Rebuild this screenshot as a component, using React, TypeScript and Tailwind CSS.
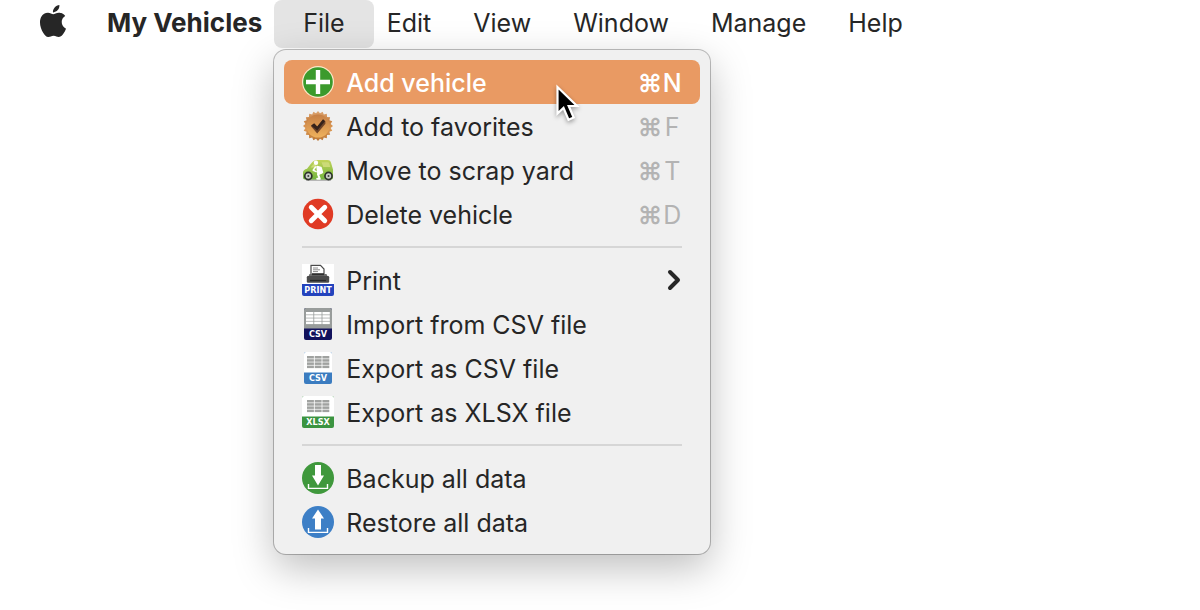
import type { ReactNode } from "react";
import { ChevronRight } from "lucide-react";
import { SiApple } from "react-icons/si";
import clsx from "clsx";

const AddIcon = () => (
  <svg viewBox="0 0 32 32" className="size-8">
    <circle cx="16" cy="16" r="16" fill="#fbe9c9" />
    <circle cx="16" cy="16" r="14.8" fill="#3b9a2c" />
    <path d="M16 4v24M4 16h24" stroke="#fff" strokeWidth="4.4" />
  </svg>
);

const sealPoints = Array.from({ length: 40 }, (_, i) => {
  const r = i % 2 === 0 ? 15 : 12.8;
  const a = (i * Math.PI) / 20;
  return `${(16 + r * Math.sin(a)).toFixed(2)},${(16 - r * Math.cos(a)).toFixed(2)}`;
}).join(" ");

const FavoriteIcon = () => (
  <svg viewBox="0 0 32 32" className="size-8">
    <defs>
      <linearGradient id="seal" x1="0" y1="0" x2="0" y2="1">
        <stop offset="0" stopColor="#dda674" />
        <stop offset="0.3" stopColor="#c98345" />
        <stop offset="0.6" stopColor="#dd9a55" />
        <stop offset="1" stopColor="#b87434" />
      </linearGradient>
      <linearGradient id="sealFace" x1="0" y1="0" x2="0" y2="1">
        <stop offset="0" stopColor="#c67f45" />
        <stop offset="1" stopColor="#efb15c" />
      </linearGradient>
    </defs>
    <polygon points={sealPoints} fill="url(#seal)" />
    <circle cx="16" cy="16" r="11.5" fill="url(#sealFace)" />
    <path d="M9 16.2l3.4-2.2 2.8 2.8 6-7.4 2.2 1.8v2.6l-8.2 9.6z" fill="#6f4428" />
    <path d="M9 15.6l3.2-2.4 3 3.2 5.8-7.2 2 2-7.8 9.4z" fill="#35221b" />
  </svg>
);

const ScrapIcon = () => (
  <svg viewBox="0 0 32 32" className="size-8">
    <defs>
      <linearGradient id="car" x1="0" y1="0" x2="0" y2="1">
        <stop offset="0" stopColor="#c3d45a" />
        <stop offset="1" stopColor="#72b53e" />
      </linearGradient>
    </defs>
    <path d="M4 26h25" stroke="#7d7d7d" strokeWidth="1" />
    <path d="M1 23.500v-5c0-2 1.500-3.100 4-3.800l4.500-5.600C11 6.800 13 6 16 6h9.500c2.400 0 3 1 3.700 3.200l1.800 6.400v7.900c0 1.400-.8 2-2 2H3c-1.200 0-2-.8-2-2z" fill="url(#car)" />
    <path d="M8.600 13.400l3-3.600c.7-.9 1.400-1.200 2.400-1.200v4.800zM19.500 8.200h6c1 0 1.500.5 1.800 1.400l1 3.400h-7z" fill="#ccdb78" />
    <path d="M13.500 13l-2.300 3.200 3 1.400" fill="none" stroke="#fff" strokeWidth="1.500" strokeLinecap="round" strokeLinejoin="round" />
    <path d="M15 12.500l4 1 1.500 5-4.500 1.500z" fill="#fff" stroke="#fff" strokeWidth="1.500" strokeLinejoin="round" />
    <path d="M19.500 18.500L16 20.300l1.800 4.500h-2.600" fill="none" stroke="#fff" strokeWidth="2" strokeLinecap="round" strokeLinejoin="round" />
    <circle cx="14" cy="8.800" r="2.200" fill="#fff" />
    <circle cx="6.300" cy="22" r="4.400" fill="#2e332c" />
    <circle cx="6.300" cy="22" r="2.700" fill="#c8cec5" />
    <circle cx="6.300" cy="22" r="1" fill="#3c413a" />
    <circle cx="26.500" cy="22" r="4.400" fill="#2e332c" />
    <circle cx="26.500" cy="22" r="2.700" fill="#c8cec5" />
    <circle cx="26.500" cy="22" r="1" fill="#3c413a" />
  </svg>
);

const DeleteIcon = () => (
  <svg viewBox="0 0 32 32" className="size-8">
    <circle cx="16" cy="16" r="15.2" fill="#e03a24" />
    <path d="M9.200 9.200l13.600 13.600M22.800 9.200L9.200 22.800" stroke="#fff" strokeWidth="4.800" strokeLinecap="round" />
  </svg>
);

const iconText = "fill-white font-['DejaVu_Sans_Condensed','Open_Sans',sans-serif] text-[9px] font-bold";

const PrintIcon = () => (
  <svg viewBox="0 0 32 32" className="size-8">
    <path d="M0 0h32v20H0z" fill="#fff" />
    <path d="M0 20h32v10a2 2 0 0 1-2 2H2a2 2 0 0 1-2-2z" fill="#2343bd" />
    <path d="M9 10.500V1.400h9.500l3.500 3.600v5.500z" fill="#fff" stroke="#4a4a4a" strokeWidth="1.200" />
    <path d="M11 4h5M11 5.800h7M11 7.600h5" stroke="#8c8c8c" strokeWidth="1" />
    <path d="M5.500 14.500l2-4.500h17l2 4.500z" fill="#6b6b6b" />
    <path d="M10 9.200h12v2H10z" fill="#2f2f2f" />
    <rect x="4.800" y="12" width="22.400" height="6.800" rx="1.200" fill="#4b4b4b" />
    <path d="M8 16.500h16" stroke="#262626" strokeWidth="1.200" />
    <text x="16" y="29" textAnchor="middle" className={iconText}>
      PRINT
    </text>
  </svg>
);

type SheetIconProps = {
  label: string;
  band: string;
  page?: string;
  cell?: string;
  wide?: boolean;
};

const SheetIcon = ({ label, band, page = "#fff", cell = "#a0a2a0", wide }: SheetIconProps) => {
  const x = wide ? 0 : 2;
  const w = 32 - x * 2;
  const dark = page !== "#fff";
  const left = dark ? 4 : 5;
  const cellW = dark ? 7.4 : 6.9;
  return (
    <svg viewBox="0 0 32 32" className="size-8">
      <rect x={x} y="0" width={w} height="32" rx="2" fill={band} />
      <path d={`M${x} 20.400V2a2 2 0 0 1 2-2h${w - 4}a2 2 0 0 1 2 2v18.400z`} fill={page} />
      {[0, 1, 2, 3].map((row) =>
        [0, 1, 2].map((col) => (
          <rect
            key={`${row}-${col}`}
            x={left + col * (cellW + 0.8)}
            y={4 + row * 3.2}
            width={cellW}
            height="2.500"
            fill={cell}
          />
        ))
      )}
      <text x="16" y="29" textAnchor="middle" className={iconText}>
        {label}
      </text>
    </svg>
  );
};

const BackupIcon = () => (
  <svg viewBox="0 0 32 32" className="size-8">
    <circle cx="16" cy="16" r="16" fill="#3f983c" />
    <path d="M13 3h6v10.500h3L16 23.500 10 13.500h3z" fill="#fff" />
    <path d="M6.500 22v4.400h19V22" fill="none" stroke="#fff" strokeWidth="1.400" />
  </svg>
);

const RestoreIcon = () => (
  <svg viewBox="0 0 32 32" className="size-8">
    <circle cx="16" cy="16" r="16" fill="#3d7fc6" />
    <path d="M13 23.500h6V12.500h3L16 3.500l-6 9h3z" fill="#fff" />
    <path d="M6.500 22v4.400h19V22" fill="none" stroke="#fff" strokeWidth="1.400" />
  </svg>
);

type Item = {
  label: string;
  icon: ReactNode;
  shortcut?: string;
  submenu?: boolean;
  active?: boolean;
};

const groups: Item[][] = [
  [
    { label: "Add vehicle", icon: <AddIcon />, shortcut: "N", active: true },
    { label: "Add to favorites", icon: <FavoriteIcon />, shortcut: "F" },
    { label: "Move to scrap yard", icon: <ScrapIcon />, shortcut: "T" },
    { label: "Delete vehicle", icon: <DeleteIcon />, shortcut: "D" },
  ],
  [
    { label: "Print", icon: <PrintIcon />, submenu: true },
    { label: "Import from CSV file", icon: <SheetIcon label="CSV" band="#12125c" page="#989c9b" cell="#fff" /> },
    { label: "Export as CSV file", icon: <SheetIcon label="CSV" band="#3b7cc0" /> },
    { label: "Export as XLSX file", icon: <SheetIcon label="XLSX" band="#3b9440" wide /> },
  ],
  [
    { label: "Backup all data", icon: <BackupIcon /> },
    { label: "Restore all data", icon: <RestoreIcon /> },
  ],
];

const Pointer = () => (
  <svg viewBox="0 0 28 42" className="absolute top-6 left-[270px] h-[42px] w-7 drop-shadow-[0_2px_2px_rgba(0,0,0,0.35)]">
    <path
      d="M3.500 3v26.500l6-5.600 5 11.800 5.200-2.200-5-11.500h8.300z"
      fill="#000"
      stroke="#fff"
      strokeWidth="2.200"
    />
  </svg>
);

const MenuItem = ({ label, icon, shortcut, submenu, active }: Item) => (
  <button
    type="button"
    role="menuitem"
    className={clsx(
      "relative flex h-11 w-full items-center gap-3 rounded-lg px-[18px] text-left whitespace-nowrap",
      active && "bg-[#e99a63] font-medium text-white"
    )}
  >
    {icon}
    <span className="flex-1 pt-0.5">{label}</span>
    {shortcut && (
      <span className={clsx("flex pt-0.5", !active && "text-[#b3b3b3]")}>
        <span className="font-semibold">⌘</span>
        <span className="w-5 text-center">{shortcut}</span>
      </span>
    )}
    {submenu && <ChevronRight className="-mr-2 size-8" strokeWidth={3} />}
    {active && <Pointer />}
  </button>
);

const FileMenu = () => (
  <div
    role="menu"
    aria-label="File"
    className="absolute top-[50px] left-0 w-[436px] rounded-xl bg-[#f0f0f0] p-[10px] shadow-[0_0_0_1px_rgba(0,0,0,0.25),0_14px_40px_rgba(0,0,0,0.26)]"
  >
    {groups.map((items, i) => (
      <div key={i}>
        {i > 0 && <hr className="mx-[18px] my-[10px] border-t-2 border-[#d6d6d6]" />}
        {items.map((item) => (
          <MenuItem key={item.label} {...item} />
        ))}
      </div>
    ))}
  </div>
);

const menus = ["File", "Edit", "View", "Window", "Manage", "Help"];

const App = () => (
  <main className="min-h-screen overflow-hidden bg-white font-['Inter',sans-serif] text-[25px] leading-[30px] text-[#262626]">
    <nav className="flex h-12 items-center pl-[37px]">
      <button type="button" aria-label="Apple menu" className="pb-1.5">
        <SiApple className="size-8" />
      </button>
      <button type="button" className="ml-[38px] pr-5 pb-0.5 text-[26px] font-bold whitespace-nowrap">
        My Vehicles
      </button>
      {menus.map((name) => (
        <div key={name} className="relative -mx-2">
          <button
            type="button"
            className={clsx("h-12 px-[29px] pb-0.5", name === "File" && "rounded-lg bg-[#e4e4e4]")}
          >
            {name}
          </button>
          {name === "File" && <FileMenu />}
        </div>
      ))}
    </nav>
  </main>
);

export default App;
